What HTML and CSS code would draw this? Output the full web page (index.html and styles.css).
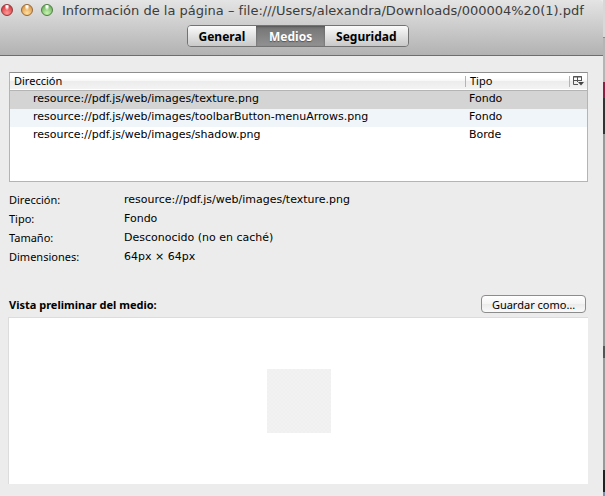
FILE: index.html
```
<!DOCTYPE html>
<html lang="es">
<head>
    <meta charset="utf-8">
    <title>Información de la página</title>
    <link rel="stylesheet" href="styles.css">
</head>
<body>
    <div class="window">
        <header class="toolbar">
            <div class="titlebar">
                <div class="lights">
                    <button class="light close" aria-label="Cerrar"></button>
                    <button class="light minimize" aria-label="Minimizar"></button>
                    <button class="light maximize" aria-label="Ampliar"></button>
                </div>
                <h1>Información de la página – file:///Users/alexandra/Downloads/000004%20(1).pdf</h1>
            </div>
            <nav class="tabs" role="tablist">
                <button class="tab" role="tab">General</button>
                <button class="tab selected" role="tab" aria-selected="true">Medios</button>
                <button class="tab" role="tab">Seguridad</button>
            </nav>
        </header>
        <main>
            <div class="tree">
                <table>
                    <thead>
                        <tr>
                            <th class="address">Dirección</th>
                            <th class="type">Tipo</th>
                            <th class="picker">
                                <button aria-label="Columnas">
                                    <svg width="11" height="10" viewBox="0 0 11 10">
                                        <path d="M5 8.5H.5V.5h8V5M0 1h9M.5 4.5h8M4.500 .5V6" fill="none" stroke="#555"/>
                                        <path d="M5 6h6L8 9.500z" fill="#444"/>
                                    </svg>
                                </button>
                            </th>
                        </tr>
                    </thead>
                    <tbody>
                        <tr class="selected"><td>resource://pdf.js/web/images/texture.png</td><td colspan="2">Fondo</td></tr>
                        <tr class="odd"><td>resource://pdf.js/web/images/toolbarButton-menuArrows.png</td><td colspan="2">Fondo</td></tr>
                        <tr><td>resource://pdf.js/web/images/shadow.png</td><td colspan="2">Borde</td></tr>
                    </tbody>
                </table>
            </div>
            <dl class="details">
                <dt>Dirección:</dt><dd>resource://pdf.js/web/images/texture.png</dd>
                <dt>Tipo:</dt><dd>Fondo</dd>
                <dt>Tamaño:</dt><dd>Desconocido (no en caché)</dd>
                <dt>Dimensiones:</dt><dd>64px × 64px</dd>
            </dl>
            <div class="preview-bar">
                <h2>Vista preliminar del medio:</h2>
                <button class="save">Guardar como…</button>
            </div>
            <div class="preview">
                <div class="texture"></div>
            </div>
        </main>
    </div>
    <div class="backdrop"></div>
</body>
</html>
```
FILE: styles.css
```
* {
    box-sizing: border-box;
}
body {
    display: flex;
    height: 100vh;
    margin: 0;
    overflow: hidden;
    color: #000;
    font-family: "DejaVu Sans", "Noto Sans", sans-serif;
    font-size: 11px;
}
button {
    padding: 0;
}
button,
dt,
h2,
th {
    font-family: "Noto Sans", sans-serif;
}
.window {
    display: flex;
    flex: 1;
    flex-direction: column;
    min-width: 0;
    background: #ececec;
}
/* sliver of the desktop behind the window */
.backdrop {
    width: 2px;
    background: linear-gradient(#d8d8d8 0 37px, #888 37px 38px, #b5b5b5 38px 82px, #8c1f42 82px 98px, #333 98px 134px, #999 134px 346px, #555 346px 358px, #999 358px 470px, #222 470px 492px, #8090a8 492px);
}
.toolbar {
    height: 56px;
    padding-right: 8px;
    border-bottom: 1px solid #6e6e6e;
    border-top-right-radius: 4px;
    background: linear-gradient(#e4e4e4, #b2b2b2);
}
.titlebar {
    display: flex;
    align-items: center;
    height: 20px;
}
.lights {
    display: flex;
    gap: 8px;
    width: 62px;
    padding-left: 1px;
}
.light {
    width: 12px;
    height: 12px;
    border: 1px solid #666;
    border-radius: 50%;
}
.close {
    border-color: #8d3a3c;
    background: radial-gradient(ellipse at 50% 10%, #fff 0 12%, transparent 35%), radial-gradient(circle at 50% 80%, #ff9a96, #dc3c42 75%);
}
.minimize {
    border-color: #96683a;
    background: radial-gradient(ellipse at 50% 10%, #fff 0 12%, transparent 35%), radial-gradient(circle at 50% 80%, #ffe0a0, #dd9a48 75%);
}
.maximize {
    border-color: #4f7d45;
    background: radial-gradient(ellipse at 50% 10%, #fff 0 12%, transparent 35%), radial-gradient(circle at 50% 80%, #c8f5b0, #6fb561 75%);
}
h1 {
    margin: 0;
    color: #3c3c3c;
    font-size: 13px;
    font-weight: normal;
    white-space: nowrap;
}
.tabs {
    display: flex;
    justify-content: center;
    width: 222px;
    height: 22px;
    margin: 5px auto 0;
    overflow: hidden;
    border: 1px solid #737373;
    border-radius: 4px;
}
.tab {
    flex: 70;
    border: 0;
    background: linear-gradient(#fbfbfb, #c9c9c9);
    font-size: 12px;
    font-weight: bold;
}
.tab:last-child {
    flex: 84;
}
.tab.selected {
    background: linear-gradient(#747474, #929292);
    box-shadow: inset 0 1px 2px #555;
    color: #fff;
    text-shadow: 0 1px 1px #555;
}
main {
    display: flex;
    flex: 1;
    flex-direction: column;
    padding: 16px 15px 12px 9px;
}
.tree {
    height: 110px;
    border: 1px solid #b4b4b4;
    border-top-color: #8e8e8e;
    background: #fff;
}
table {
    width: 100%;
    border-collapse: collapse;
    table-layout: fixed;
    line-height: 16px;
}
thead tr {
    height: 17px;
    border-bottom: 1px solid #b4b4b4;
    background: linear-gradient(#fff 0 30%, #f6f6f6 50%, #ececec 51%, #f3f3f3);
}
th {
    padding: 0 4px;
    font-weight: normal;
    text-align: left;
}
.type {
    width: 104px;
    padding-left: 5px;
}
.picker {
    width: 18px;
    padding: 0;
}
.type,
.picker {
    background: linear-gradient(#b4b4b4, #b4b4b4) 0 3px / 1px 11px no-repeat;
}
.picker button {
    display: block;
    margin-left: 4px;
    border: 0;
    background: none;
}
.picker svg {
    display: block;
}
td {
    height: 18px;
    padding: 0 0 2px 23px;
}
td + td {
    padding-left: 4px;
}
tbody .selected {
    background: #d4d4d4;
}
tbody .odd {
    background: #f0f5f9;
}
.details {
    display: grid;
    grid-template-columns: 115px 1fr;
    margin: 8px 0 0;
    line-height: 19px;
}
dd {
    margin: 0;
}
.preview-bar {
    display: flex;
    align-items: center;
    justify-content: space-between;
    margin-top: 29px;
    padding-right: 2px;
}
h2 {
    margin: 0;
    font-size: 11px;
}
.save {
    width: 105px;
    height: 18px;
    border: 1px solid #8c8c8c;
    border-radius: 4px;
    background: linear-gradient(#fff, #f4f4f4 50%, #ebebeb 51%, #fafafa);
    font-size: 11px;
}
.preview {
    display: flex;
    flex: 1;
    align-items: center;
    justify-content: center;
    margin-top: 4px;
    margin-left: -1px;
    border-top: 1px solid #dcdcdc;
    border-left: 1px solid #dcdcdc;
    background: #fff;
}
.texture {
    width: 64px;
    height: 64px;
    background: repeating-conic-gradient(#f0f0f0 0 25%, #f2f2f2 0 50%) 0 0 / 4px 4px;
}
```
